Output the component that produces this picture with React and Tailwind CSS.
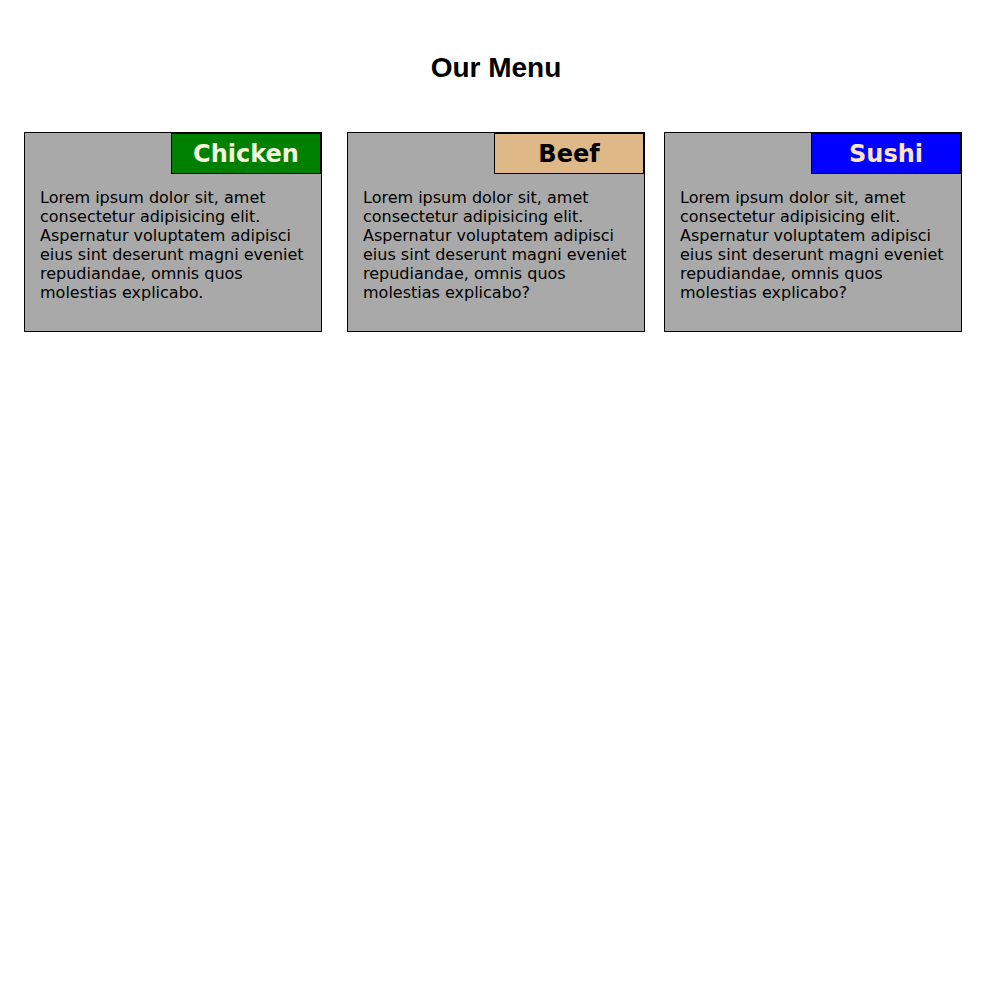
// App.jsx - menu cards
const items = [
  {
    name: 'Chicken',
    label: 'bg-[#008000] text-[#f5f5dc]',
    gap: 'ml-[24px]',
    end: '.',
  },
  {
    name: 'Beef',
    label: 'bg-[#deb887] text-black',
    gap: 'ml-[25px]',
    end: '?',
  },
  {
    name: 'Sushi',
    label: 'bg-[#0000ff] text-[#ffe4c4]',
    gap: 'ml-[19px]',
    end: '?',
  },
];

function MenuCard({ item }) {
  return (
    <div className={`relative w-[298px] h-[200px] shrink-0 border border-black bg-[#a9a9a9] ${item.gap}`}>
      {/* tag in the top right corner */}
      <div
        className={`absolute top-0 right-0 w-[150px] h-[41px] border border-black flex items-center justify-center text-[24px] font-bold ${item.label}`}
        style={{ fontFamily: '"DejaVu Sans", sans-serif' }}
      >
        {item.name}
      </div>
      <p
        className="pt-[55px] px-[15px] text-[16px] leading-normal text-black"
        style={{ fontFamily: '"DejaVu Sans", sans-serif', lineHeight: 'normal' }}
      >
        Lorem ipsum dolor sit, amet consectetur adipisicing elit. Aspernatur voluptatem adipisci eius sint deserunt
        magni eveniet repudiandae, omnis quos molestias explicabo{item.end}
      </p>
    </div>
  );
}

export default function App() {
  return (
    <div className="min-h-screen bg-white">
      <h1
        className="pt-[52px] text-center text-[28px] leading-[32px] font-bold text-black"
        style={{ fontFamily: '"Liberation Sans", Arial, sans-serif' }}
      >
        Our Menu
      </h1>

      <div className="flex mt-[48px]">
        {items.map((item) => (
          <MenuCard key={item.name} item={item} />
        ))}
      </div>
    </div>
  );
}
